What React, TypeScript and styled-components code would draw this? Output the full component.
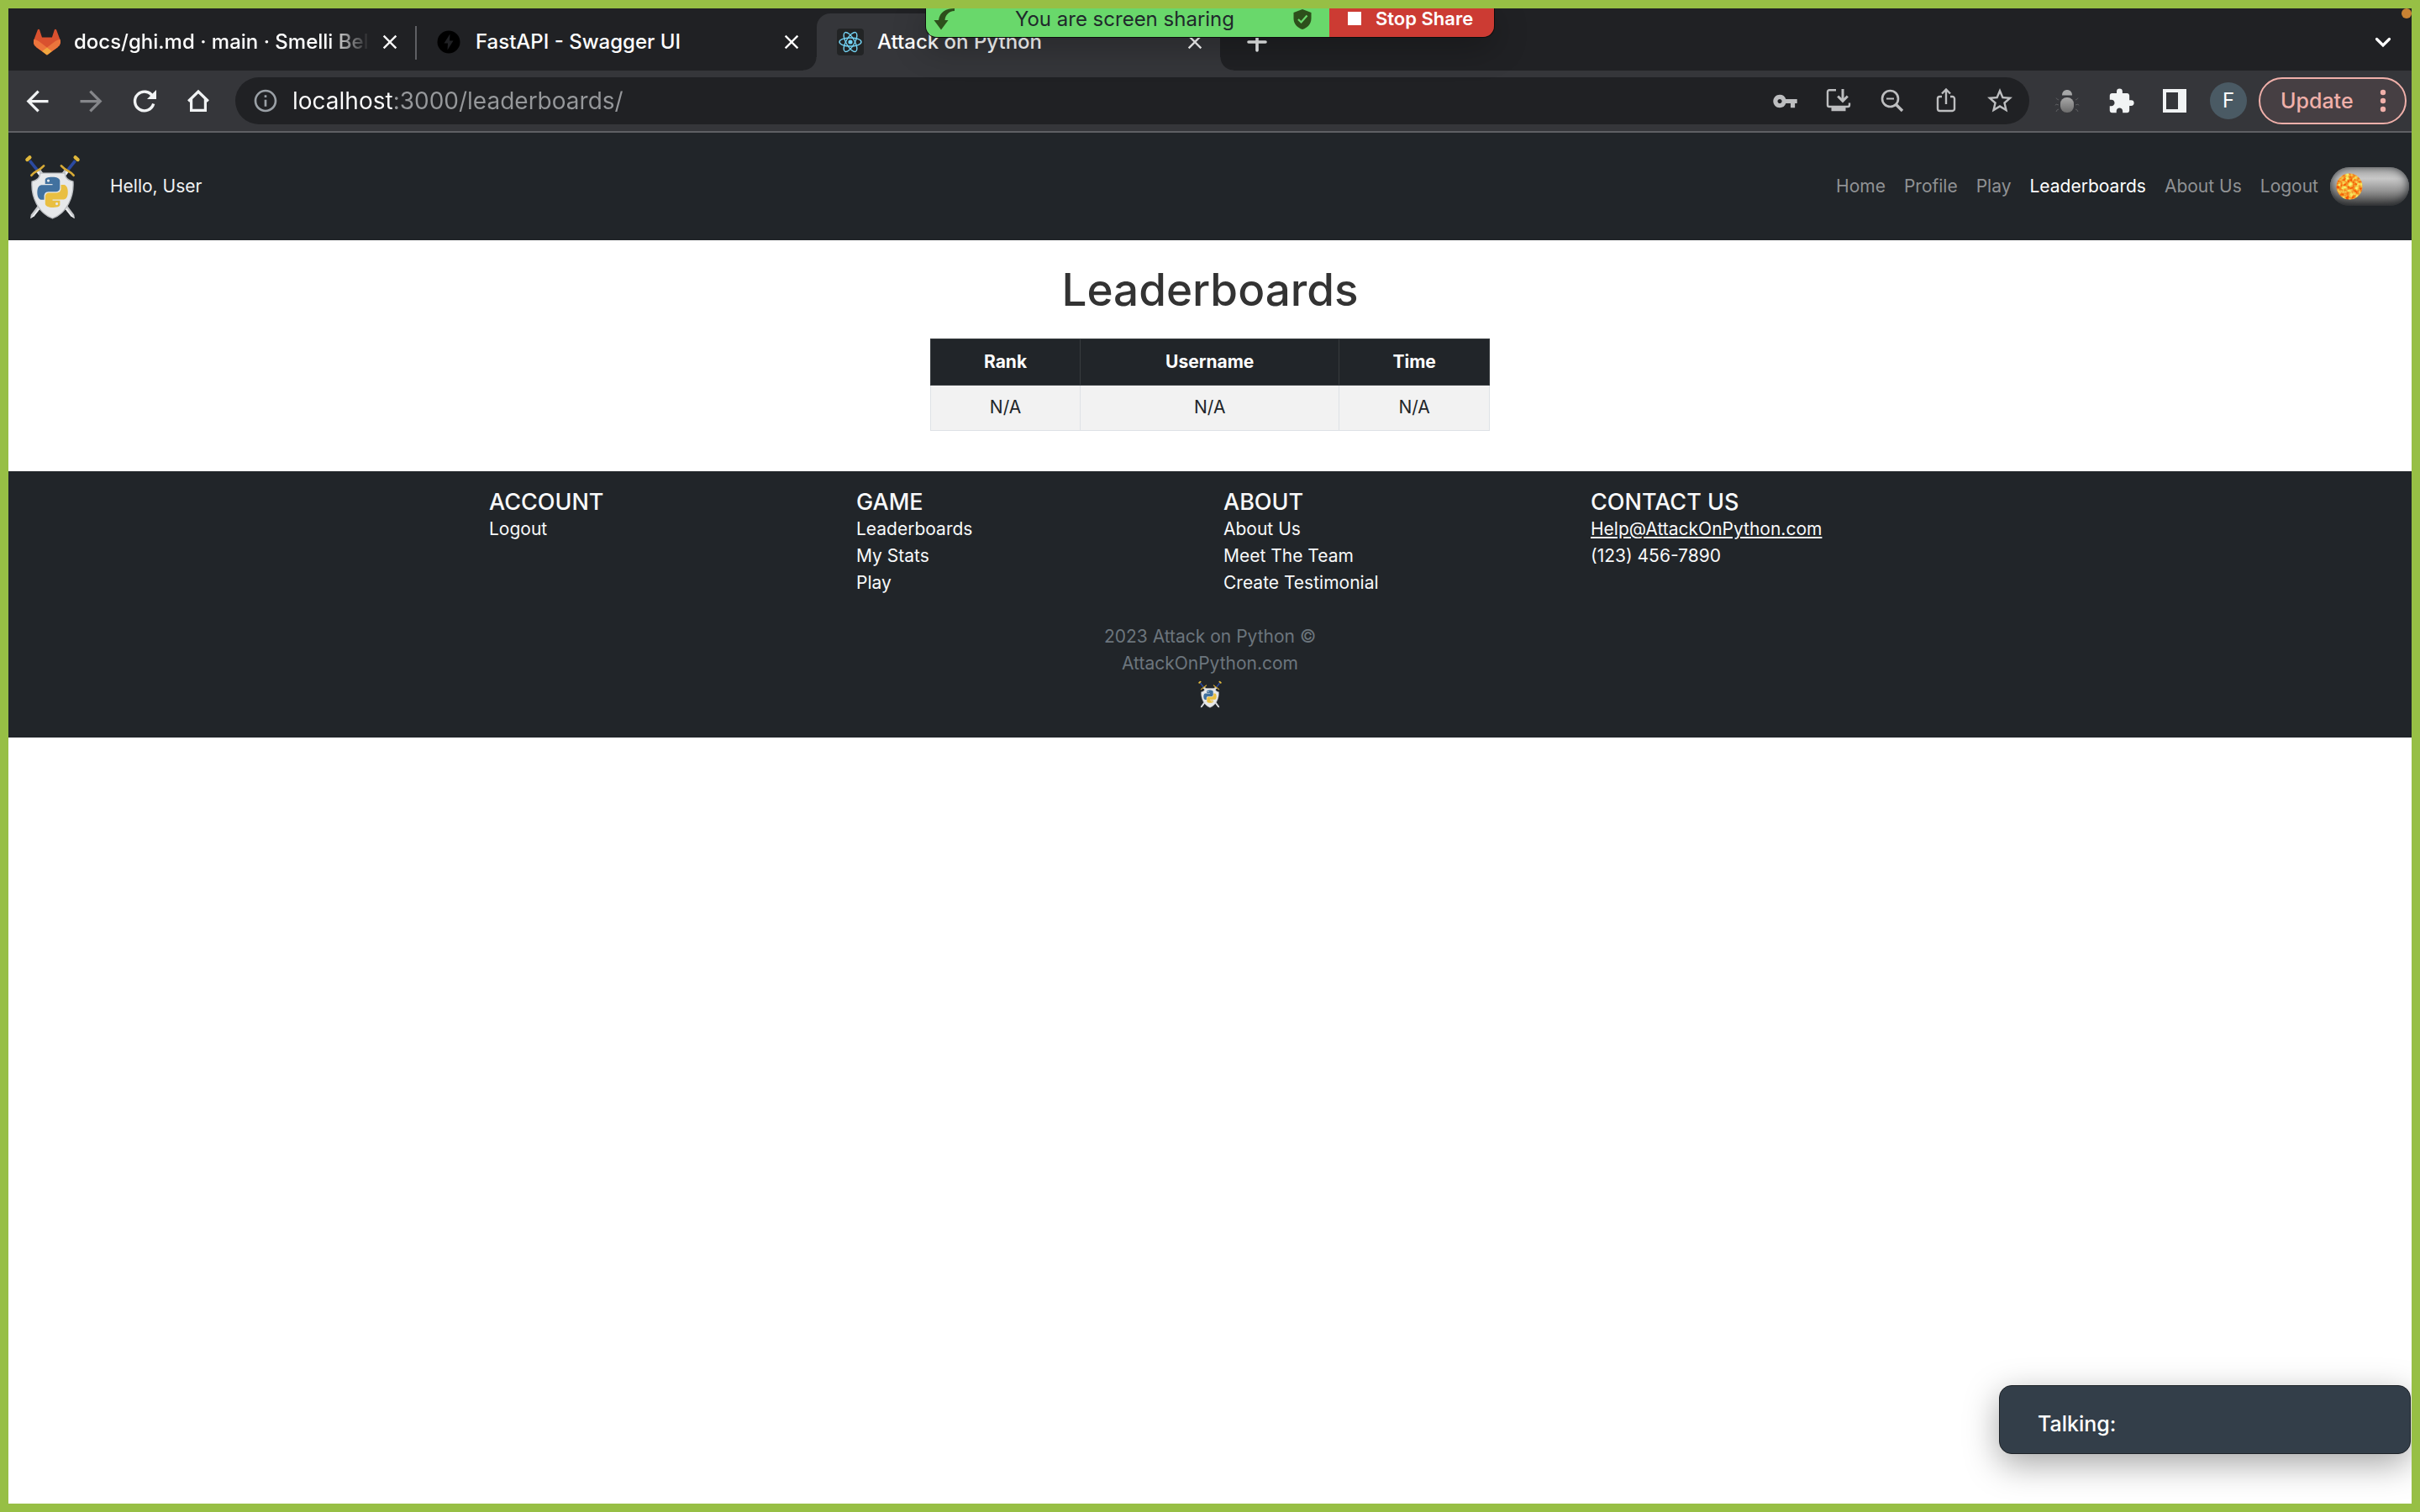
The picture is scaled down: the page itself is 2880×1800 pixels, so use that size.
import React from "react";
import styled, { createGlobalStyle, css } from "styled-components";
import {
  MdArrowBack,
  MdArrowForward,
  MdClose,
  MdExtension,
  MdInfoOutline,
  MdStarBorder,
  MdVpnKey,
} from "react-icons/md";

const GlobalStyle = createGlobalStyle`
  *, *::before, *::after { box-sizing: border-box; }
  body {
    margin: 0;
    font-family: Inter, "Liberation Sans", sans-serif;
    font-size: 21px;
    line-height: 32px;
    color: #212529;
    background: #fff;
  }
  h1, h2, p, ul { margin: 0; padding: 0; }
  ul { list-style: none; }
  a { color: inherit; text-decoration: none; }
  button { font-family: inherit; border: 0; padding: 0; background: none; color: inherit; cursor: pointer; }
  svg { display: block; flex: none; }
`;

/* Screen */

const Screen = styled.div`
  position: relative;
  min-height: 100vh;
  border: 10px solid #97bf45;
  overflow: hidden;
`;

const RecordingDot = styled.span`
  position: absolute;
  top: 0;
  right: 0;
  width: 12px;
  height: 12px;
  border-radius: 6px;
  background: #c88233;
`;

/* Browser tabs */

const TabStrip = styled.div`
  display: flex;
  align-items: flex-end;
  height: 74px;
  padding: 0 18px 0 6px;
  background: #202124;
`;

const Tab = styled.div<{ $active?: boolean; $divided?: boolean }>`
  position: relative;
  display: flex;
  align-items: center;
  gap: 16px;
  width: ${(p) => (p.$active ? 480 : 478)}px;
  height: 68px;
  padding: 0 14px 0 24px;
  color: #fff;
  ${(p) =>
    p.$divided &&
    css`
      &::after {
        content: "";
        position: absolute;
        right: -2px;
        top: 15px;
        width: 2px;
        height: 40px;
        background: #5f6064;
      }
    `}
  ${(p) =>
    p.$active &&
    css`
      background: #35363a;
      border-radius: 16px 16px 0 0;
      &::before,
      &::after {
        content: "";
        position: absolute;
        bottom: 0;
        width: 16px;
        height: 16px;
      }
      &::before {
        left: -16px;
        background: radial-gradient(circle at 0 0, transparent 15px, #35363a 16px);
      }
      &::after {
        right: -16px;
        background: radial-gradient(circle at 100% 0, transparent 15px, #35363a 16px);
      }
    `}
`;

const TabTitle = styled.span<{ $faded?: boolean }>`
  flex: 1;
  min-width: 0;
  margin-right: -8px;
  overflow: hidden;
  white-space: nowrap;
  font-size: 24px;
  font-weight: 500;
  ${(p) => p.$faded && css`mask-image: linear-gradient(to right, #000 86%, transparent);`}
`;

const TabClose = styled.button`
  display: grid;
  place-items: center;
  width: 32px;
  height: 32px;
`;

const NewTabButton = styled.button`
  display: grid;
  place-items: center;
  width: 56px;
  height: 68px;
  margin-left: 16px;
  color: #f1f3f4;
`;

const TabSearchButton = styled(NewTabButton)`
  width: 32px;
  margin-left: auto;
`;

/* Browser toolbar */

const Toolbar = styled.div`
  display: flex;
  align-items: center;
  height: 74px;
  padding: 0 6px 0 2px;
  background: #35363a;
  border-bottom: 2px solid #5f6064;
  color: #f1f3f4;
`;

const ToolButton = styled.button<{ $dim?: boolean }>`
  display: grid;
  place-items: center;
  width: 64px;
  height: 56px;
  color: ${(p) => (p.$dim ? "#85868a" : "inherit")};
`;

const AddressBar = styled.label`
  flex: 1;
  display: flex;
  align-items: center;
  height: 56px;
  margin: 0 13px 0 12px;
  padding: 0 3px 0 20px;
  border-radius: 28px;
  background: #202124;
  color: #bdbec0;
`;

const AddressInput = styled.input`
  flex: 1;
  min-width: 0;
  height: 56px;
  margin-left: 16px;
  padding: 0;
  border: 0;
  outline: 0;
  font: 400 28px/56px Inter, "Liberation Sans", sans-serif;
  color: transparent;
  background: linear-gradient(to right, #fff 120px, #96989b 120px);
  background-clip: text;
`;

const Avatar = styled.button`
  width: 44px;
  height: 44px;
  margin: 0 14px 0 10px;
  border-radius: 22px;
  background: #4a5a64;
  color: #fff;
  font-size: 24px;
  line-height: 44px;
`;

const UpdateButton = styled.button`
  display: flex;
  align-items: center;
  justify-content: space-between;
  width: 176px;
  height: 56px;
  padding: 0 22px 0 24px;
  border: 2px solid #f0b0aa;
  border-radius: 28px;
  background: #463f43;
  color: #f0b0aa;
  font-size: 25px;
  font-weight: 500;
`;

/* Screen sharing banner */

const ShareBanner = styled.div`
  position: absolute;
  z-index: 2;
  top: 0;
  left: 50%;
  transform: translateX(-50%);
  display: flex;
  height: 35px;
  border: 1px solid #0c0c0c;
  border-top: 0;
  border-radius: 0 0 14px 14px;
  overflow: hidden;
`;

const BannerShadow = styled.div`
  position: absolute;
  z-index: 1;
  top: 0;
  left: 50%;
  transform: translateX(-50%);
  width: 678px;
  height: 35px;
  border-radius: 14px;
  box-shadow: 0 10px 40px rgba(0, 0, 0, 0.3);
`;

const ShareStatus = styled.div`
  display: flex;
  align-items: center;
  justify-content: space-between;
  width: 480px;
  padding: 0 21px 8px 8px;
  background: #69d86b;
  color: #20292b;
  font-size: 24px;
  line-height: 24px;
`;

const StopShare = styled.button`
  display: flex;
  align-items: center;
  gap: 17px;
  width: 196px;
  padding: 0 0 10px 22px;
  background: #cc3b33;
  color: #fff;
  font-size: 22px;
  line-height: 24px;
  font-weight: 600;
  white-space: nowrap;
  &::before {
    content: "";
    width: 16px;
    height: 16px;
    background: #fff;
  }
`;

/* Site header */

const Header = styled.header`
  display: flex;
  align-items: center;
  height: 128px;
  padding: 0 3px 0 19px;
  background: #212529;
`;

const Greeting = styled.p`
  margin-left: 35px;
  color: #f1f2f3;
`;

const Nav = styled.nav`
  display: flex;
  gap: 22px;
  margin-left: auto;
`;

const NavLink = styled.a<{ $current?: boolean }>`
  color: ${(p) => (p.$current ? "#fff" : "#909294")};
`;

const ThemeToggle = styled.label`
  display: grid;
  align-items: center;
  margin-left: 14px;
  > * { grid-area: 1 / 1; }
  > svg { margin-left: 7px; }
`;

const ToggleTrack = styled.input`
  appearance: none;
  width: 94px;
  height: 46px;
  margin: 0;
  border-radius: 23px;
  background: linear-gradient(#b4b4b4, #c8c8c8 30%, #969696 60%, #444);
  box-shadow: inset 0 -1px 12px 0 #212529;
`;

/* Leaderboard */

const Main = styled.main`
  display: flex;
  flex-direction: column;
  align-items: center;
  gap: 26px;
  padding: 27px 0 48px;
`;

const Title = styled.h1`
  font-size: 53px;
  line-height: 64px;
  font-weight: 500;
  color: #333;
`;

const Table = styled.table`
  width: 666px;
  max-width: 100%;
  border-collapse: collapse;
  text-align: center;
  th, td { padding: 11px; }
  th {
    background: #212529;
    border: 1px solid #373b3e;
    color: #fff;
    font-weight: 700;
  }
  td {
    padding-top: 10px;
    background: #f2f2f2;
    border: 1px solid #dee2e6;
  }
`;

/* Site footer */

const Footer = styled.footer`
  display: flex;
  flex-direction: column;
  align-items: center;
  gap: 32px;
  padding: 21px 0 35px;
  background: #212529;
  color: #f8f9fa;
`;

const FooterColumns = styled.div`
  display: grid;
  grid-template-columns: repeat(4, 1fr);
  width: 1748px;
  max-width: 100%;
`;

const FooterColumn = styled.section`
  padding: 0 16px;
`;

const FooterHeading = styled.h2`
  font-size: 27px;
  line-height: 32px;
  font-weight: 500;
`;

const MailLink = styled.a`
  text-decoration: underline;
`;

const Copyright = styled.div`
  display: flex;
  flex-direction: column;
  align-items: center;
  color: #6c757d;
  > svg { margin-top: 4px; }
`;

/* Call overlay */

const TalkingPanel = styled.aside`
  position: absolute;
  right: 1px;
  bottom: 59px;
  width: 490px;
  height: 82px;
  padding: 29px 45px 0;
  border: 1px solid #1d2227;
  border-radius: 15px;
  background: #333e49;
  box-shadow: 0 12px 40px rgba(0, 0, 0, 0.35);
  color: #fff;
  font-size: 25px;
  font-weight: 500;
`;

/* Drawings */

const GitLabIcon = () => (
  <svg width="32" height="32" viewBox="0 0 25 24">
    <path fill="#d9512f" d="m24.507 9.5-.034-.09L21.082.562a.896.896 0 0 0-1.694.091l-2.29 7.01H7.825L5.535.653a.898.898 0 0 0-1.694-.09L.451 9.411.416 9.5a6.297 6.297 0 0 0 2.09 7.278l.012.01.03.022 5.16 3.867 2.56 1.935 1.554 1.176a1.051 1.051 0 0 0 1.268 0l1.555-1.176 2.56-1.935 5.197-3.89.014-.01A6.297 6.297 0 0 0 24.507 9.5Z" />
    <path fill="#ec743c" d="m24.507 9.5-.034-.09a11.44 11.44 0 0 0-4.56 2.051l-7.447 5.632 4.742 3.584 5.197-3.89.014-.01A6.297 6.297 0 0 0 24.507 9.5Z" />
    <path fill="#ec743c" d="M5.01 11.461a11.43 11.43 0 0 0-4.56-2.05L.416 9.5a6.297 6.297 0 0 0 2.09 7.278l.012.01.03.022 5.16 3.867 4.745-3.584-7.444-5.632Z" />
    <path fill="#f0a63f" d="m7.707 20.677 2.56 1.935 1.555 1.176a1.051 1.051 0 0 0 1.268 0l1.555-1.176 2.56-1.935-4.743-3.584-4.755 3.584Z" />
  </svg>
);

const FastApiIcon = () => (
  <svg width="32" height="32" viewBox="0 0 32 32">
    <circle cx="16" cy="16" r="13.5" fill="#000" />
    <path d="M17.5 6.500 10.500 17.500H15L14.500 25.500 21.500 14.500H17Z" fill="#202124" />
  </svg>
);

const ReactIcon = () => (
  <svg width="32" height="32" viewBox="0 0 32 32">
    <rect width="32" height="32" rx="4" fill="#222425" />
    <circle cx="16" cy="16" r="2.600" fill="#74d3f4" />
    <g fill="none" stroke="#74d3f4" strokeWidth="1.400">
      <ellipse cx="16" cy="16" rx="13" ry="5" />
      <ellipse cx="16" cy="16" rx="13" ry="5" transform="rotate(60 16 16)" />
      <ellipse cx="16" cy="16" rx="13" ry="5" transform="rotate(120 16 16)" />
    </g>
  </svg>
);

const ReloadIcon = () => (
  <svg width="32" height="32" viewBox="0 0 32 32" fill="none">
    <path d="M25.700 11A11.300 11.300 0 1 0 26.700 19.500" stroke="currentColor" strokeWidth="3.400" />
    <path d="M30 3V14H19Z" fill="currentColor" />
  </svg>
);

const HomeIcon = () => (
  <svg width="32" height="32" viewBox="0 0 32 32" fill="none" stroke="currentColor" strokeWidth="3.200">
    <path d="M4.200 16.500 16 5 27.800 16.500M7.600 14V27.400H24.400V14" />
  </svg>
);

const InstallIcon = () => (
  <svg width="32" height="32" viewBox="0 0 32 32" fill="none" stroke="currentColor" strokeWidth="2.400">
    <path d="M13 3.200H5A2 2 0 0 0 3 5.200V21a2 2 0 0 0 2 2H27a2 2 0 0 0 2-2V18.500" />
    <path d="M21 2V16" strokeWidth="3" />
    <path d="M15.200 10.500 21 16.300 26.800 10.500" strokeWidth="3" />
    <path d="M7.500 26H24.500" strokeWidth="4.500" />
  </svg>
);

const ZoomOutIcon = () => (
  <svg width="32" height="32" viewBox="0 0 32 32" fill="none" stroke="currentColor" strokeWidth="2.600">
    <circle cx="13.500" cy="13.500" r="9.500" />
    <path d="M9 13.500H18" strokeWidth="2" />
    <path d="M20.500 20.500 28 28" strokeWidth="3.400" />
  </svg>
);

const ShareIcon = () => (
  <svg width="32" height="32" viewBox="0 0 32 32" fill="none" stroke="currentColor" strokeWidth="2.400">
    <path d="M11 11H8.500A2.500 2.500 0 0 0 6 13.500V25.500A2.500 2.500 0 0 0 8.500 28H23.500A2.500 2.500 0 0 0 26 25.500V13.500A2.500 2.500 0 0 0 23.500 11H21" />
    <path d="M16 20V3M11 7.500 16 2.500 21 7.500" />
  </svg>
);

const BugIcon = () => (
  <svg width="32" height="32" viewBox="0 0 32 32">
    <defs>
      <linearGradient id="bug" x1="0" y1="0" x2="0" y2="1">
        <stop offset="0" stopColor="#a8a8a8" />
        <stop offset="1" stopColor="#6c6c6c" />
      </linearGradient>
    </defs>
    <path d="M10 9.500C10 5 13 3 16 3S22 5 22 9.500Z" fill="#a6a7a8" />
    <rect x="8" y="12" width="16" height="18" rx="7.500" fill="url(#bug)" />
    <g fill="none" stroke="#5c5d60" strokeWidth="1">
      <path d="M6 15 4 14 3 12.500M6 21 3 20 2 21.500M6 26 4 27 3 29M26 15 28 14 29 12.500M26 21 29 20 30 21.500M26 26 28 27 29 29" />
    </g>
  </svg>
);

const PanelIcon = () => (
  <svg width="28" height="28" viewBox="0 0 28 28">
    <path fillRule="evenodd" d="M0 0H28V28H0ZM4 4V24H18V4Z" fill="currentColor" />
  </svg>
);

const DotsIcon = () => (
  <svg width="8" height="28" viewBox="0 0 8 28" fill="currentColor">
    <circle cx="4" cy="4" r="3.200" />
    <circle cx="4" cy="14" r="3.200" />
    <circle cx="4" cy="24" r="3.200" />
  </svg>
);

const PlusIcon = () => (
  <svg width="24" height="24" viewBox="0 0 24 24" stroke="currentColor" strokeWidth="3.600" strokeLinecap="round">
    <path d="M12 2V22M2 12H22" />
  </svg>
);

const ChevronIcon = () => (
  <svg width="20" height="20" viewBox="0 0 20 20" fill="none" stroke="#fff" strokeWidth="3.200" strokeLinecap="round">
    <path d="M2.500 6.500 10 14 17.500 6.500" />
  </svg>
);

const ArrowIcon = () => (
  <svg width="28" height="26" viewBox="0 0 28 26">
    <path d="M26 0C16 0 8.500 4 7 14H1.500L10 25.500 18.500 14H14.500C15 8 19 3.500 26 3Z" fill="#2d4f1b" />
  </svg>
);

const ShieldCheckIcon = () => (
  <svg width="22" height="26" viewBox="0 0 22 26">
    <path d="M11 1 21.500 5V12C21.500 18.500 17 23 11 25 5 23 .500 18.500.500 12V5Z" fill="#2d4f1b" />
    <path d="M6 13 9.500 16.500 16.500 8.500" fill="none" stroke="#69d86b" strokeWidth="2.200" />
  </svg>
);

const Sword = () => (
  <g>
    <path d="M40 60 54 50 176 214 178 228 164 219Z" fill="#c3c5c8" />
    <path d="M47 55 178 228 164 219 40 60Z" fill="#eceef0" />
    <path d="M18 22 44 54" stroke="#2b4aa0" strokeWidth="11" />
    <path d="M24 74C32 60 50 60 68 40" stroke="#d8ab36" strokeWidth="8" strokeLinecap="round" fill="none" />
    <path d="M9 18 18 10" stroke="#e0b83c" strokeWidth="13" strokeLinecap="round" />
  </g>
);

const CrestLogo = ({ width, height }: { width: number; height: number }) => (
  <svg width={width} height={height} viewBox="0 0 198 230" role="img" aria-label="Attack on Python">
    <Sword />
    <g transform="translate(198 0) scale(-1 1)">
      <Sword />
    </g>
    <path
      d="M55 66H143C143 84 152 92 172 96 176 150 150 208 99 227 48 208 22 150 26 96 46 92 55 84 55 66Z"
      fill="#e6e8ea"
      stroke="#b9bcc0"
      strokeWidth="4"
    />
    <g transform="translate(45 80) scale(4.500)">
      <path fill="#41719f" d="M14.25.18l.9.2.73.26.59.3.45.32.34.34.25.34.16.33.1.3.04.26.02.2-.01.13V8.5l-.05.63-.13.55-.21.46-.26.38-.3.31-.33.25-.35.19-.35.14-.33.1-.3.07-.26.04-.21.02H8.77l-.69.05-.59.14-.5.22-.41.27-.33.32-.27.35-.2.36-.15.37-.1.35-.07.32-.04.27-.02.21v3.06H3.17l-.21-.03-.28-.07-.32-.12-.35-.18-.36-.26-.36-.36-.35-.46-.32-.59-.28-.73-.21-.88-.14-1.05-.05-1.23.06-1.22.16-1.04.24-.87.32-.71.36-.57.4-.44.42-.33.42-.24.4-.16.36-.1.32-.05.24-.01h.16l.06.01h8.16v-.83H6.18l-.01-2.75-.02-.37.05-.34.11-.31.17-.28.25-.26.31-.23.38-.2.44-.18.51-.15.58-.12.64-.1.71-.06.77-.04.84-.02 1.27.05zm-6.3 1.98l-.23.33-.08.41.08.41.23.34.33.22.41.09.41-.09.33-.22.23-.34.08-.41-.08-.41-.23-.33-.33-.22-.41-.09-.41.09z" />
      <path fill="#e9bf42" d="M21.1 6.11l.28.06.32.12.35.18.36.27.36.35.35.47.32.59.28.73.21.88.14 1.04.05 1.23-.06 1.23-.16 1.04-.24.86-.32.71-.36.57-.4.45-.42.33-.42.24-.4.16-.36.09-.32.05-.24.02-.16-.01h-8.22v.82h5.84l.01 2.76.02.36-.05.34-.11.31-.17.29-.25.25-.31.24-.38.2-.44.17-.51.15-.58.13-.64.09-.71.07-.77.04-.84.01-1.27-.04-1.07-.14-.9-.2-.73-.25-.59-.3-.45-.33-.34-.34-.25-.34-.16-.33-.1-.3-.04-.25-.02-.2.01-.13v-5.34l.05-.64.13-.54.21-.46.26-.38.3-.32.33-.24.35-.2.35-.14.33-.1.3-.06.26-.04.21-.02.13-.01h5.84l.69-.05.59-.14.5-.21.41-.28.33-.32.27-.35.2-.36.15-.36.1-.35.07-.32.04-.28.02-.21V6.07h2.09l.14.01zm-6.47 14.25l-.23.33-.08.41.08.41.23.33.33.23.41.08.41-.08.33-.23.23-.33.08-.41-.08-.41-.23-.33-.33-.23-.41-.08-.41.08z" />
    </g>
  </svg>
);

const SunIcon = () => (
  <svg width="32" height="32" viewBox="0 0 32 32">
    <defs>
      <filter id="plasma" x="0" y="0" width="1" height="1" colorInterpolationFilters="sRGB">
        <feTurbulence type="fractalNoise" baseFrequency="0.25" numOctaves="2" seed="4" />
        <feColorMatrix values="0 0 0 0 0.96  1.2 0 0 0 0.05  0.8 0 0 0 -0.2  0 0 0 0 1" />
        <feComposite in2="SourceGraphic" operator="in" />
      </filter>
    </defs>
    <circle cx="16" cy="16" r="15.500" fill="#f5a02c" filter="url(#plasma)" />
  </svg>
);

/* Content */

const tabs = [
  { title: "docs/ghi.md · main · Smelli Bell", icon: <GitLabIcon />, faded: true, divided: true },
  { title: "FastAPI - Swagger UI", icon: <FastApiIcon /> },
  { title: "Attack on Python", icon: <ReactIcon />, active: true },
];

const navItems = ["Home", "Profile", "Play", "Leaderboards", "About Us", "Logout"];

const footerGroups = [
  { heading: "ACCOUNT", links: ["Logout"] },
  { heading: "GAME", links: ["Leaderboards", "My Stats", "Play"] },
  { heading: "ABOUT", links: ["About Us", "Meet The Team", "Create Testimonial"] },
];

const rows = [{ rank: "N/A", username: "N/A", time: "N/A" }];

export default function App() {
  return (
    <Screen>
      <GlobalStyle />
      <TabStrip>
        {tabs.map((tab) => (
          <Tab key={tab.title} $active={tab.active} $divided={tab.divided}>
            {tab.icon}
            <TabTitle $faded={tab.faded}>{tab.title}</TabTitle>
            <TabClose aria-label="Close tab">
              <MdClose size={28} />
            </TabClose>
          </Tab>
        ))}
        <NewTabButton aria-label="New tab"><PlusIcon /></NewTabButton>
        <TabSearchButton aria-label="Search tabs"><ChevronIcon /></TabSearchButton>
      </TabStrip>

      <Toolbar>
        <ToolButton aria-label="Back"><MdArrowBack size={39} /></ToolButton>
        <ToolButton aria-label="Forward" $dim><MdArrowForward size={39} /></ToolButton>
        <ToolButton aria-label="Reload"><ReloadIcon /></ToolButton>
        <ToolButton aria-label="Home page"><HomeIcon /></ToolButton>
        <AddressBar>
          <MdInfoOutline size={32} color="#9aa0a6" />
          <AddressInput aria-label="Address" defaultValue="localhost:3000/leaderboards/" spellCheck={false} />
          <ToolButton aria-label="Passwords"><MdVpnKey size={31} /></ToolButton>
          <ToolButton aria-label="Install app"><InstallIcon /></ToolButton>
          <ToolButton aria-label="Zoom out"><ZoomOutIcon /></ToolButton>
          <ToolButton aria-label="Share page"><ShareIcon /></ToolButton>
          <ToolButton aria-label="Bookmark"><MdStarBorder size={36} /></ToolButton>
        </AddressBar>
        <ToolButton aria-label="Debugger"><BugIcon /></ToolButton>
        <ToolButton aria-label="Extensions"><MdExtension size={33} /></ToolButton>
        <ToolButton aria-label="Side panel"><PanelIcon /></ToolButton>
        <Avatar>F</Avatar>
        <UpdateButton>
          Update
          <DotsIcon />
        </UpdateButton>
      </Toolbar>

      <Header>
        <CrestLogo width={67} height={77} />
        <Greeting>Hello, User</Greeting>
        <Nav>
          {navItems.map((item) => (
            <NavLink key={item} href="#" $current={item === "Leaderboards"}>{item}</NavLink>
          ))}
        </Nav>
        <ThemeToggle>
          <ToggleTrack type="checkbox" aria-label="Dark mode" />
          <SunIcon />
        </ThemeToggle>
      </Header>

      <Main>
        <Title>Leaderboards</Title>
        <Table>
          <thead>
            <tr>
              <th scope="col">Rank</th>
              <th scope="col">Username</th>
              <th scope="col">Time</th>
            </tr>
          </thead>
          <tbody>
            {rows.map((row, i) => (
              <tr key={i}>
                <td>{row.rank}</td>
                <td>{row.username}</td>
                <td>{row.time}</td>
              </tr>
            ))}
          </tbody>
        </Table>
      </Main>

      <Footer>
        <FooterColumns>
          {footerGroups.map((group) => (
            <FooterColumn key={group.heading}>
              <FooterHeading>{group.heading}</FooterHeading>
              <ul>
                {group.links.map((link) => (
                  <li key={link}><a href="#">{link}</a></li>
                ))}
              </ul>
            </FooterColumn>
          ))}
          <FooterColumn>
            <FooterHeading>CONTACT US</FooterHeading>
            <ul>
              <li><MailLink href="mailto:Help@AttackOnPython.com">Help@AttackOnPython.com</MailLink></li>
              <li>(123) 456-7890</li>
            </ul>
          </FooterColumn>
        </FooterColumns>
        <Copyright>
          <p>2023 Attack on Python ©</p>
          <p>AttackOnPython.com</p>
          <CrestLogo width={28} height={33} />
        </Copyright>
      </Footer>

      <BannerShadow />
      <ShareBanner>
        <ShareStatus>
          <ArrowIcon />
          <span>You are screen sharing</span>
          <ShieldCheckIcon />
        </ShareStatus>
        <StopShare>Stop Share</StopShare>
      </ShareBanner>
      <RecordingDot />
      <TalkingPanel>Talking:</TalkingPanel>
    </Screen>
  );
}
